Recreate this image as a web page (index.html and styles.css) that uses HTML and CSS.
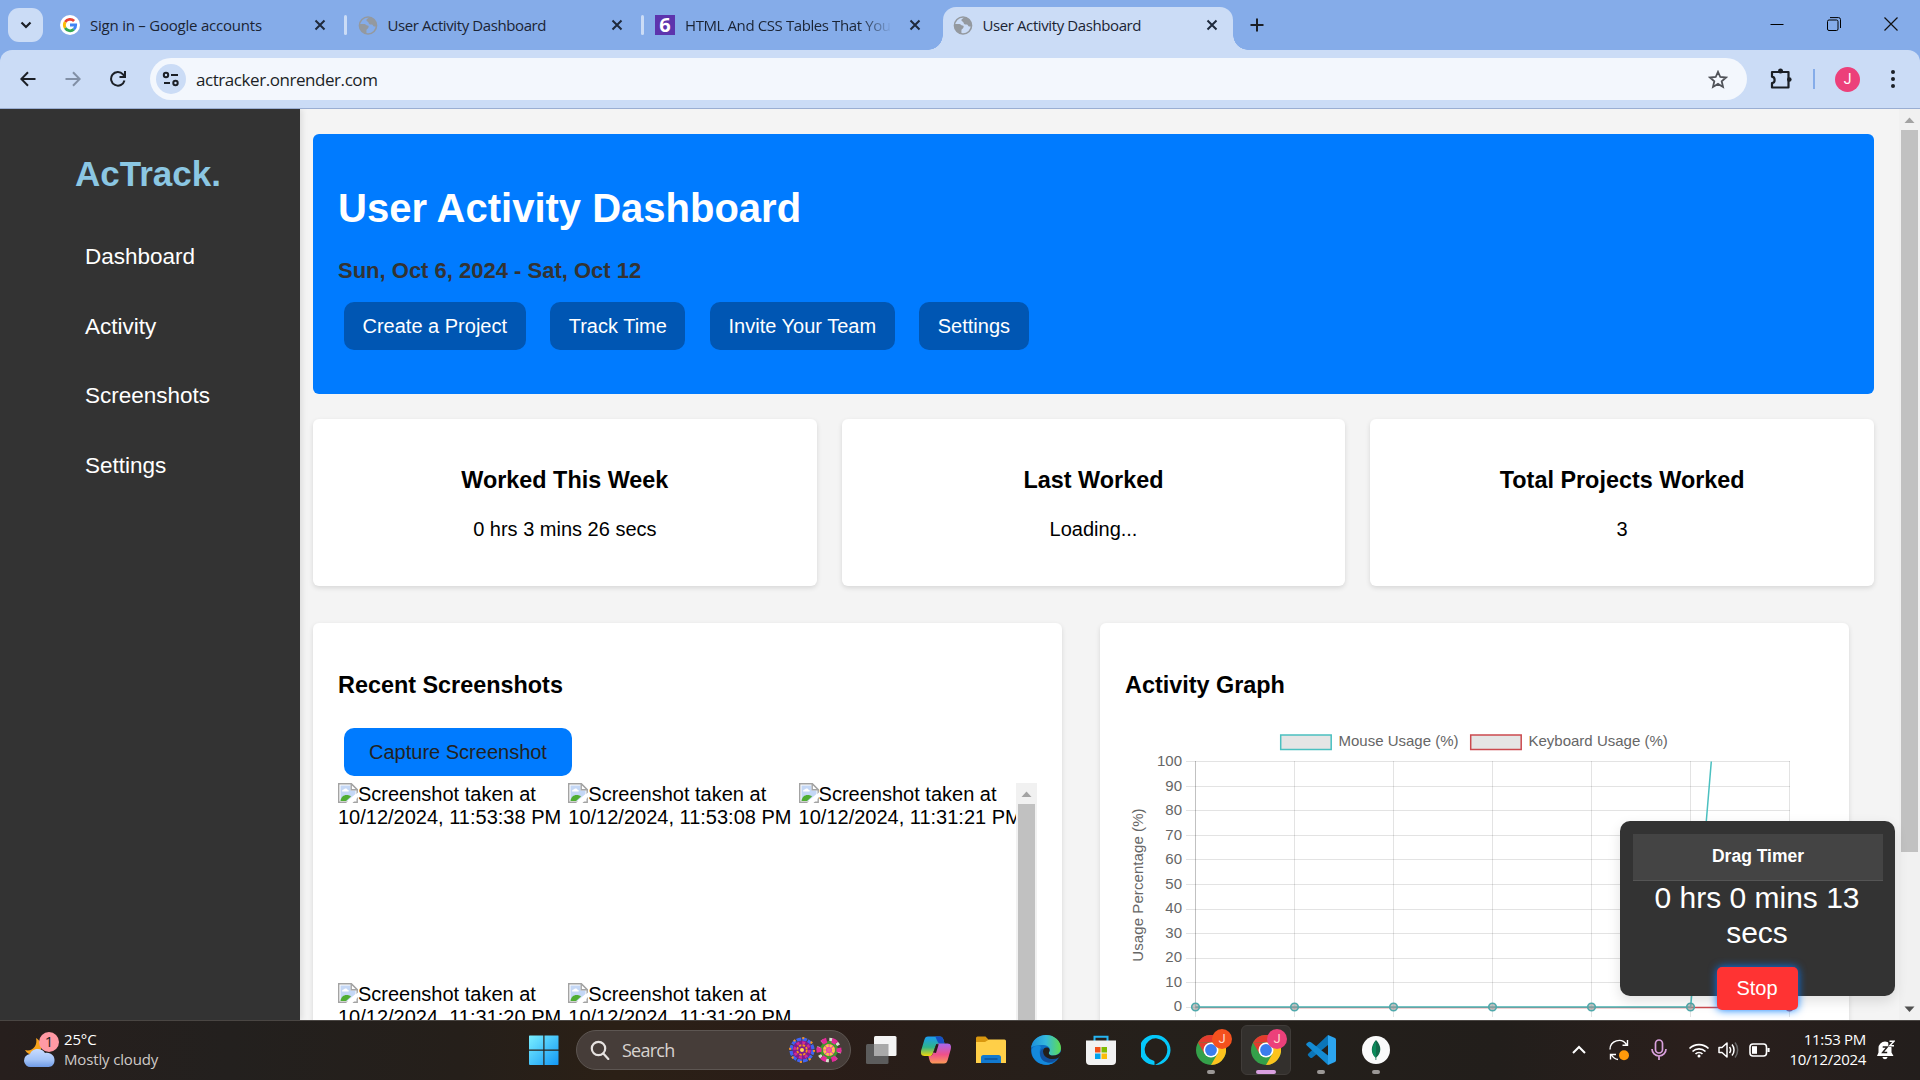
FILE: index.html
```html
<!DOCTYPE html>
<html lang="en">
<head>
<meta charset="utf-8">
<title>User Activity Dashboard</title>
<link rel="stylesheet" href="styles.css">
</head>
<body>
<svg class="defs" width="0" height="0">
  <defs>
    <symbol id="close" viewBox="0 0 12 12"><path d="M1.5 1.5l9 9M10.5 1.5l-9 9" stroke="#1f2a3c" stroke-width="2" fill="none"/></symbol>
    <symbol id="globe" viewBox="0 0 18 18"><circle cx="9" cy="9" r="8.100" fill="none" stroke="#94999f" stroke-width="1.500"/><path d="M1 7.500h4.500c1.500 0 1.500 1.500 3 1.500s1.500 1.500.5 2.500-1.500 1-1.500 2.500v2.500C3.500 16 1 12.500 1 7.500zM10.500 1.200C9 2.500 7.500 2.500 7.500 4s2 1 2 2.300S11 8 12.500 8s1 2 2.500 2h2C17.500 5 14.500 1.800 10.500 1.200z" fill="#94999f"/></symbol>
    <symbol id="broken" viewBox="0 0 20 20">
      <path d="M.7.7h12.500l6 6v12.600H.7z" fill="#fff" stroke="#a3a3a3" stroke-width="1.400"/>
      <path d="M2.500 2.500h10v5h5v3.500L9 18H2.500z" fill="#c4d7f5"/>
      <path d="M4 8.500c0-1.500 1-2 2-2 .5-1.500 3-1.500 3.500.2 1.500 0 1.500 1.800 1 1.800z" fill="#fff"/>
      <path d="M2.500 18c.5-4 3-6 6-6 2 0 3.500.5 4.500 1.500L8 18z" fill="#4fae33"/>
      <path d="M13.200.7v6h6z" fill="#fff" stroke="#a3a3a3" stroke-width="1.400"/>
      <path d="M8 20L20 9.500V14l-5.500 6z" fill="#fff"/>
    </symbol>
    <symbol id="chromelogo" viewBox="0 0 30 30">
      <circle cx="15" cy="15" r="15" fill="#34a04a"/>
      <path d="M2 7.500A15 15 0 0 1 28 7.500H15z" fill="#e33b2e"/><path d="M2 7.500L8.500 18.700 15 8z" fill="#e33b2e"/>
      <path d="M15 7.500h13A15 15 0 0 1 15 30l6.500-11.300z" fill="#fcc31e"/>
      <circle cx="15" cy="15" r="7.500" fill="#fff"/><circle cx="15" cy="15" r="5.900" fill="#3b7ded"/>
    </symbol>
  </defs>
</svg>

<header class="tabstrip">
  <div class="tab-search"><svg width="12" height="12" viewBox="0 0 12 12"><path d="M1.500 3.500L6 8l4.500-4.500" fill="none" stroke="#1b1f26" stroke-width="2.200"/></svg></div>
  <div class="tab">
    <svg class="fav" width="20" height="20" viewBox="0 0 20 20"><circle cx="10" cy="10" r="10" fill="#fff"/><g fill="none" stroke-width="2.800"><path d="M5.200 7a5.700 5.700 0 0 1 8.900-1" stroke="#ea4335"/><path d="M5.200 13a5.900 5.900 0 0 1 0-6" stroke="#fbbc05"/><path d="M5.200 13a5.700 5.700 0 0 0 8.600 1.400" stroke="#34a853"/><path d="M10 10h5.700a5.700 5.700 0 0 1-1.900 4.400" stroke="#4285f4"/></g></svg>
    <span class="tab-title wide">Sign in – Google accounts</span><svg class="x" width="12" height="12"><use href="#close"/></svg>
  </div>
  <div class="tab sep">
    <svg class="fav" width="19" height="19"><use href="#globe"/></svg>
    <span class="tab-title">User Activity Dashboard</span><svg class="x" width="12" height="12"><use href="#close"/></svg>
  </div>
  <div class="tab sep">
    <span class="fav six">6</span>
    <span class="tab-title fade">HTML And CSS Tables That You</span><svg class="x" width="12" height="12"><use href="#close"/></svg>
  </div>
  <div class="tab active">
    <svg class="fav" width="19" height="19"><use href="#globe"/></svg>
    <span class="tab-title">User Activity Dashboard</span><svg class="x" width="12" height="12"><use href="#close"/></svg>
  </div>
  <svg class="newtab" width="14" height="14" viewBox="0 0 14 14"><path d="M7 .5v13M.5 7h13" stroke="#1b1f26" stroke-width="2"/></svg>
  <div class="win">
    <svg width="14" height="14" viewBox="0 0 14 14"><path d="M.5 7.500h13" stroke="#000"/></svg>
    <svg width="14" height="14" viewBox="0 0 14 14" fill="none" stroke="#000"><rect x=".5" y="3" width="10.500" height="10.500" rx="1.500"/><path d="M3 .6h8.500a2 2 0 0 1 2 2V11"/></svg>
    <svg width="14" height="14" viewBox="0 0 14 14"><path d="M.5.5l13 13M13.500.5l-13 13" stroke="#111" stroke-width="1.200"/></svg>
  </div>
</header>

<div class="toolbar">
  <div class="nav-btns">
    <svg width="16" height="16" viewBox="0 0 16 16" fill="none" stroke="#1b1f26" stroke-width="2"><path d="M15.500 8H1.500M8 1.200L1.300 8 8 14.800"/></svg>
    <svg width="16" height="16" viewBox="0 0 16 16" fill="none" stroke="#8290a6" stroke-width="2"><path d="M.5 8h14M8 1.200L14.700 8 8 14.800"/></svg>
    <svg width="16" height="16" viewBox="0 0 16 16" fill="none" stroke="#1b1f26" stroke-width="2"><path d="M14.500 9.500A6.800 6.800 0 1 1 13 3.300L14.800 5.500"/><path d="M15 0v6H9.500"/></svg>
  </div>
  <div class="omnibox">
    <span class="site"><svg width="18" height="16" viewBox="0 0 18 16" fill="none" stroke="#1b1f26" stroke-width="2"><circle cx="4" cy="4" r="2.200"/><path d="M9 4h7M2 12h6"/><circle cx="13.500" cy="12" r="2.200"/></svg></span>
    <span class="url">actracker.onrender.com</span>
    <svg class="star" width="20" height="19" viewBox="0 0 20 19"><path d="M10 1.800l2.300 5.200 5.700.5-4.300 3.800 1.300 5.600-5-3-5 3 1.300-5.600L2 7.500l5.700-.5z" fill="none" stroke="#505359" stroke-width="1.800"/></svg>
  </div>
  <svg class="puzzle" width="22" height="22" viewBox="0 0 22 22"><path d="M2 4h16.500v15.500H2v-4.300c3.500-.5 3.500-6 0-6.500z" fill="none" stroke="#1b1f26" stroke-width="2.200" stroke-linejoin="round"/><circle cx="10.500" cy="3" r="2.500" fill="#1b1f26"/><circle cx="19.300" cy="11.500" r="2.300" fill="#1b1f26"/></svg>
  <i class="tb-sep"></i>
  <span class="avatar">J</span>
  <svg class="dots" width="4" height="18" viewBox="0 0 4 18" fill="#1b1f26"><circle cx="2" cy="2" r="2"/><circle cx="2" cy="9" r="2"/><circle cx="2" cy="16" r="2"/></svg>
</div>

<div class="page">
  <aside class="sidebar">
    <div class="brand">AcTrack.</div>
    <nav><a>Dashboard</a><a>Activity</a><a>Screenshots</a><a>Settings</a></nav>
  </aside>
  <main>
    <section class="hero">
      <h1>User Activity Dashboard</h1>
      <p class="range">Sun, Oct 6, 2024 - Sat, Oct 12</p>
      <div class="actions"><button>Create a Project</button><button>Track Time</button><button>Invite Your Team</button><button>Settings</button></div>
    </section>
    <section class="cards">
      <div class="card"><h3>Worked This Week</h3><p>0 hrs 3 mins 26 secs</p></div>
      <div class="card"><h3>Last Worked</h3><p>Loading...</p></div>
      <div class="card"><h3>Total Projects Worked</h3><p>3</p></div>
    </section>
    <section class="panels">
      <div class="panel">
        <h3>Recent Screenshots</h3>
        <button class="capture">Capture Screenshot</button>
        <div class="gallery">
          <div class="shots">
            <div class="shot"><svg width="20" height="20"><use href="#broken"/></svg>Screenshot taken at<br>10/12/2024, 11:53:38 PM</div>
            <div class="shot"><svg width="20" height="20"><use href="#broken"/></svg>Screenshot taken at<br>10/12/2024, 11:53:08 PM</div>
            <div class="shot"><svg width="20" height="20"><use href="#broken"/></svg>Screenshot taken at<br>10/12/2024, 11:31:21 PM</div>
            <div class="shot"><svg width="20" height="20"><use href="#broken"/></svg>Screenshot taken at<br>10/12/2024, 11:31:20 PM</div>
            <div class="shot"><svg width="20" height="20"><use href="#broken"/></svg>Screenshot taken at<br>10/12/2024, 11:31:20 PM</div>
          </div>
          <div class="bar"><svg width="21" height="21" viewBox="0 0 21 21"><path d="M5.500 14l5-5.500 5 5.500z" fill="#a3a3a3"/></svg><i class="thumb"></i></div>
        </div>
      </div>
      <div class="panel graph">
        <h3>Activity Graph</h3>
        <svg class="chart" width="699" height="310" viewBox="1125 720 699 310">
          <g stroke-width="2">
            <rect x="1280.700" y="735" width="50.500" height="14.500" fill="#e5e5e5" stroke="#4bc0c0" stroke-width="1.500"/>
            <rect x="1470.700" y="735" width="50.500" height="14.500" fill="#e5e5e5" stroke="#cb4a4f" stroke-width="1.500"/>
          </g>
          <g class="lbl"><text x="1338.500" y="746">Mouse Usage (%)</text><text x="1528.500" y="746">Keyboard Usage (%)</text></g>
          <path class="grid" d="M1186 761.500H1790M1186 786.500H1790M1186 810.500H1790M1186 835.500H1790M1186 859.500H1790M1186 884.500H1790M1186 909.500H1790M1186 933.500H1790M1186 958.500H1790M1186 982.500H1790M1186 1007.500H1790"/>
          <path class="grid" d="M1195.500 761V1017M1294.500 761V1017M1393.500 761V1017M1492.500 761V1017M1591.500 761V1017M1690.500 761V1017M1789.500 761V1017"/>
          <path class="grid axis" d="M1195.500 761V1007M1196 1007.500H1790"/>
          <g class="lbl ticks"><text x="1182" y="766">100</text><text x="1182" y="790.500">90</text><text x="1182" y="815">80</text><text x="1182" y="839.500">70</text><text x="1182" y="864">60</text><text x="1182" y="889">50</text><text x="1182" y="913">40</text><text x="1182" y="937.500">30</text><text x="1182" y="962">20</text><text x="1182" y="987">10</text><text x="1182" y="1011">0</text></g>
          <text class="lbl ytitle" transform="translate(1143 885) rotate(-90)">Usage Percentage (%)</text>
          <path d="M1195.500 1007.500H1789.500" stroke="#cb4a4f" stroke-width="1.400"/>
          <path d="M1195.500 1007H1690.700L1711.300 761.500" fill="none" stroke="#4bc0c0" stroke-width="1.500"/>
          <g fill="#9a9a9a" fill-opacity=".6" stroke="#4fa9ab" stroke-width="1.600"><circle cx="1195.500" cy="1007" r="3.800"/><circle cx="1294.500" cy="1007" r="3.800"/><circle cx="1393.500" cy="1007" r="3.800"/><circle cx="1492.500" cy="1007" r="3.800"/><circle cx="1591.500" cy="1007" r="3.800"/><circle cx="1690.500" cy="1007" r="3.800"/><circle cx="1789.500" cy="1007" r="3.800" stroke="#cb4a4f"/></g>
        </svg>
      </div>
    </section>
  </main>
  <div class="scroll">
    <svg width="21" height="21" viewBox="0 0 21 21"><path d="M5.500 14l5-5.500 5 5.500z" fill="#a3a3a3"/></svg>
    <i class="thumb"></i>
    <svg class="down" width="21" height="21" viewBox="0 0 21 21"><path d="M5.500 7.500h10l-5 5.500z" fill="#505050"/></svg>
  </div>
  <div class="timer">
    <div class="drag">Drag Timer</div>
    <div class="time">0 hrs 0 mins 13 secs</div>
    <button class="stop">Stop</button>
  </div>
</div>

<footer class="taskbar">
  <div class="weather">
    <svg width="44" height="40" viewBox="0 0 44 40">
      <path d="M19 7c2 8-4 14-11 12 2 4 7 6 11 5 6-2 8-12 0-17z" fill="#f7a31c"/>
      <path d="M14 36a6.500 6.500 0 0 1-1-13c2-6 12-7 15-1 6-1 10 3 9.500 8s-4 6-7 6z" fill="url(#cl)"/>
      <circle cx="32" cy="11" r="10" fill="#ff99a4"/><text x="32" y="16" text-anchor="middle" class="badge">1</text>
      <defs><linearGradient id="cl" x2="0" y2="1"><stop offset="0" stop-color="#c9dcff"/><stop offset=".6" stop-color="#a3c3f7"/><stop offset="1" stop-color="#6f9be6"/></linearGradient></defs>
    </svg>
    <div class="wtext"><b>25°C</b><span>Mostly cloudy</span></div>
  </div>
  <div class="dock">
    <svg class="start" width="30" height="30" viewBox="0 0 30 30"><defs><linearGradient id="ws" x1="0" y1="0" x2="1" y2="1" gradientUnits="objectBoundingBox"><stop offset="0" stop-color="#7bf0ff"/><stop offset="1" stop-color="#1197f5"/></linearGradient></defs><mask id="wm"><path d="M0 .500h14.300v14.100H0zM15.500.5h14v14.100h-14zM0 15.800h14.300V30H0zM15.500 15.800h14V30h-14z" fill="#fff"/></mask><rect width="30" height="30" rx="1" fill="url(#ws)" mask="url(#wm)"/></svg>
    <div class="search">
      <svg width="20" height="20" viewBox="0 0 20 20" fill="none" stroke="#e6e2e0" stroke-width="2.200"><circle cx="8.500" cy="8.500" r="6.700"/><path d="M13.300 13.500l5 5.500" stroke-linecap="round"/></svg>
      <span>Search</span>
      <svg class="flowers" width="54" height="28" viewBox="0 0 54 28">
        <g transform="translate(13 14)"><circle r="10.800" fill="none" stroke="#3f63f2" stroke-width="3.500" stroke-dasharray="4.650 1"/><circle r="9.500" fill="#7d1c8f"/><circle r="7.500" fill="none" stroke="#d12a96" stroke-width="2.500" stroke-dasharray="3 2.890"/><circle r="12" fill="none" stroke="#f7941e" stroke-width="2" stroke-dasharray="2 7.420"/><circle r="4.800" fill="none" stroke="#f7941e" stroke-width="1.800" stroke-dasharray="2.500 1.270"/><circle r="2" fill="#ffd84a"/></g>
        <g transform="translate(40 14)"><circle r="10.500" fill="none" stroke="#d9dfd0" stroke-width="3.500" stroke-dasharray="3 5.250"/><circle r="9" fill="#3f9a2a"/><circle r="10" fill="none" stroke="#e32a9a" stroke-width="5" stroke-dasharray="5 5.470" stroke-dashoffset="2.500"/><circle r="6" fill="#e23fb0"/><circle r="4.500" fill="none" stroke="#ffc64a" stroke-width="2.800" stroke-dasharray="2.700 .83"/><circle r="2" fill="#f06090"/></g>
      </svg>
    </div>
    <div class="app"><svg width="32" height="30" viewBox="0 0 32 30"><rect x="1" y="9" width="22.500" height="20" rx="1.500" fill="#5c5c5c"/><rect x="9" y="1" width="22.500" height="20" rx="1.500" fill="#f4f4f4"/><path d="M9 9h14.500v12H9z" fill="#a9a9a9"/></svg></div>
    <div class="app"><svg width="32" height="30" viewBox="0 0 32 30"><defs><linearGradient id="c1" x2="0" y2="1"><stop offset="0" stop-color="#1b9cf2"/><stop offset=".55" stop-color="#2fb48a"/><stop offset="1" stop-color="#f3d60b"/></linearGradient><linearGradient id="c2" x2="0" y2="1"><stop offset="0" stop-color="#a667f0"/><stop offset=".55" stop-color="#f0508a"/><stop offset="1" stop-color="#fb9a57"/></linearGradient></defs><path d="M8 1.500h12c3 0 3.500 3 4.500 7h-5c-3 0-4 2-4.800 5L13 18c-.7 2.500-1.500 3-4 3H4.500C1 21 .5 18 1.300 15l3-10C5 2.500 6 1.500 8 1.500z" fill="url(#c1)"/><path d="M15 1.500h5c3 0 3.500 3 4.500 7h-5c-2.500-1-3-6-4.500-7z" fill="#174fc4"/><path d="M24 28.500H13c-2.500 0-3.500-2.500-4.500-7.500 3 0 4-.5 4.700-3L16 11c1-2.500 2-2.500 4-2.500h7.500c3.500 0 4 3 3.200 6l-3 10.500c-.7 2.500-1.700 3.500-3.700 3.500z" fill="url(#c2)"/><path d="M13.300 17.500l3-8.500 2.400.2-2.700 8.800z" fill="#2a1d18"/></svg></div>
    <div class="app"><svg width="30" height="28" viewBox="0 0 30 28"><path d="M0 2a1.500 1.500 0 0 1 1.500-1.500h8L13 4v6H0z" fill="#d9970f"/><path d="M0 6h9l4-2.500h15.500A1.500 1.500 0 0 1 30 5v22H0z" fill="#ffcf48"/><path d="M5 27v-5.500a2.500 2.500 0 0 1 2.500-2.500h15a2.500 2.500 0 0 1 2.500 2.500V27z" fill="#1279cf"/><path d="M8.500 23h13" stroke="#0b4f96" stroke-width="1.400"/></svg></div>
    <div class="app"><svg width="30" height="30" viewBox="0 0 30 30"><defs><linearGradient id="e1" x2="1" y2="0"><stop offset="0" stop-color="#1c8fdc"/><stop offset=".5" stop-color="#35b9dd"/><stop offset="1" stop-color="#5fdc4f"/></linearGradient></defs><circle cx="15" cy="15" r="15" fill="#0c6fc4"/><path d="M0 13C1 5 7.500 0 15 0c9 0 15 6.500 15 13 0 5-4 7.500-8 7.500-4.500 0-5-2-3.500-4 1.500-2.500-1-6.500-6-6.500C7 10 1 11 0 13z" fill="url(#e1)"/><path d="M10 12c-4 7 1 17 12 16C14 33-1 27 1 14c2-4 7-4 9-2z" fill="#1489dc"/><path d="M12.500 13.500c-1.500 6 4 11.500 14.500 9-5 8-18 6-18-4 0-3 1.500-5 3.500-5z" fill="#124f9c"/><path d="M15.500 12.500c2.500 0 4 2 2.700 4.300-1 2 0 3.700 3.800 3.700 3.500 0 6.500-1.200 8-4v3.500l-2.700 3C22 25.500 12.500 24 12 16.500c0-2.500 1.500-4 3.500-4z" fill="#241e1b"/></svg></div>
    <div class="app"><svg width="30" height="30" viewBox="0 0 30 30"><path d="M8.500 6V1.700h13V6" fill="none" stroke="#26b5f2" stroke-width="2"/><path d="M0 5.500h30V26a4 4 0 0 1-4 4H4a4 4 0 0 1-4-4z" fill="#f2f2f2"/><path d="M9 12h5.500v5.500H9z" fill="#f1511b"/><path d="M15.500 12H21v5.500h-5.500z" fill="#80bb00"/><path d="M9 18.500h5.500V24H9z" fill="#00a3ee"/><path d="M15.500 18.500H21V24h-5.500z" fill="#fbbc09"/></svg></div>
    <div class="app"><svg width="30" height="30" viewBox="0 0 30 30"><path fill-rule="evenodd" d="M15 0a15 15 0 1 0-1.500 29.900v-3.200c0-.5-.2-.8-.8-1A11.300 11.300 0 1 1 26.300 15c0 7-5 11-12.300 15A15 15 0 0 0 15 0z" fill="#05c8fa"/></svg></div>
    <div class="app"><svg width="30" height="30"><use href="#chromelogo"/></svg><b class="who">J</b><i class="run"></i></div>
    <div class="app current"><svg width="30" height="30"><use href="#chromelogo"/></svg><b class="who pink">J</b><i class="run"></i></div>
    <div class="app"><svg width="30" height="30" viewBox="0 0 30 30"><path d="M22 0L2.500 18.500c-1 1-1 1.500 0 2.500L4 22.500c1 .8 1.500.8 2.500 0L22 10z" fill="#0b75b8"/><path d="M22 30L.8 10.500c-.8-1-.8-1.500 0-2.300L2.500 7C3.500 6.500 4 6.500 5 7.200L22 20.500z" fill="#148bd3"/><path d="M22 0l7 3c.7.4 1 1 1 1.500v21c0 .5-.3 1-1 1.500l-7 3z" fill="#2ca5f0"/></svg><i class="run"></i></div>
    <div class="app"><svg width="30" height="30" viewBox="0 0 30 30"><circle cx="15" cy="15" r="14" fill="#fafafa"/><path d="M15 5c6 6 5.500 13 .3 17.500V25h-.8v-2.500C9.500 18 9.500 11 15 5z" fill="#11694a"/><path d="M15 6v17c-5-4-5-11 0-17z" fill="#0b8a5a"/></svg><i class="run"></i></div>
  </div>
  <div class="tray">
    <svg width="14" height="10" viewBox="0 0 14 10" fill="none" stroke="#fff" stroke-width="2"><path d="M1 8l6-6 6 6"/></svg>
    <svg class="t-sync" width="20" height="22" viewBox="0 0 20 22" fill="none" stroke="#fff" stroke-width="1.400"><path d="M1 10.500A9 9 0 0 1 17.500 5.500M18.500 1v5.200h-5M9 20.500A9 9 0 0 1 2.500 16M1.500 20.500V15.500h5.500"/><circle cx="15" cy="16.300" r="5" fill="#ff9a0a" stroke="none"/></svg>
    <svg class="t-mic" width="16" height="22" viewBox="0 0 16 22" fill="none" stroke="#d9a0dd" stroke-width="1.700"><rect x="4.500" y="1" width="7" height="13" rx="3.500"/><path d="M1 10a7 7 0 0 0 14 0M8 17v4"/></svg>
    <svg class="t-wifi" width="22" height="16" viewBox="0 0 22 16" fill="none" stroke="#fff" stroke-width="1.700"><path d="M1.500 6.500a13.500 13.500 0 0 1 19 0M4.500 9.500a9.300 9.300 0 0 1 13 0M7.500 12a5 5 0 0 1 7 0"/><circle cx="11" cy="14" r="1.500" fill="#fff" stroke="none"/></svg>
    <svg class="t-vol" width="21" height="18" viewBox="0 0 21 18" fill="none" stroke="#fff" stroke-width="1.500"><path d="M1 6.500h3L9 2v14l-5-4.500H1z" stroke-linejoin="round"/><path d="M11.500 6a5 5 0 0 1 0 6M14 3.500a8.500 8.500 0 0 1 0 11"/><path d="M17 1.500a12 12 0 0 1 0 15" stroke="#666"/></svg>
    <svg class="t-bat" width="21" height="14" viewBox="0 0 21 14" fill="none" stroke="#fff" stroke-width="1.600"><rect x="1" y="1" width="16.500" height="12" rx="3"/><path d="M19.500 5v4" stroke-width="2.200"/><rect x="3" y="3.200" width="5" height="7.600" fill="#fff" stroke="none"/></svg>
    <div class="clock"><span>11:53 PM</span><span>10/12/2024</span></div>
    <svg class="t-bell" width="18" height="20" viewBox="0 0 18 20"><path d="M1.500 8a6.500 6.500 0 0 1 6.500-6.500c3.500 0 6.500 3 6.500 6.500v4.500l2 3.500H0l1.500-3.500zM5.500 17h5c-.5 3-4.500 3-5 0z" fill="#fff"/><path d="M11.300 0H18v7h-6.700z" fill="#221e1c"/><path d="M5.700 7h4.500l-4.500 5.500h4.500" fill="none" stroke="#221e1c" stroke-width="1.500"/><path d="M12.500 1.200H17l-4.300 4.600H17" fill="none" stroke="#fff" stroke-width="1.400"/></svg>
  </div>
</footer>
</body>
</html>
```
FILE: styles.css
```css
* { box-sizing: border-box; }
html, body { margin: 0; width: 1920px; height: 1080px; overflow: hidden; }
body { display: flex; flex-direction: column; font-family: "Liberation Sans", Arial, sans-serif; font-size: 20px; color: #000; }
svg { display: block; flex: none; }
button { font: inherit; border: 0; margin: 0; }
.defs { position: absolute; }

/* tab strip */
.tabstrip { flex: none; height: 50px; display: flex; background: #85ace9; font: 15px "Open Sans", sans-serif; letter-spacing: -.4px; color: #1b2434; }
.tab-search { width: 35px; height: 34px; margin: 8px 4px 0 8px; border-radius: 11px; background: #cbdcf6; display: grid; place-items: center; }
.tab { position: relative; width: 297.5px; height: 50px; display: flex; align-items: center; padding: 0 19px 0 13px; }
.fav { width: 20px; margin-right: 10px; }
.six { height: 20px; background: #5d34ad; color: #fff; font: bold 20px/19px "Open Sans", sans-serif; text-align: center; letter-spacing: 0; }
.tab-title { flex: 1; white-space: nowrap; overflow: hidden; }
.wide { letter-spacing: -.22px; }
.fade { flex: none; width: 205px; margin-right: auto; -webkit-mask-image: linear-gradient(90deg, #000 175px, transparent 207px); }
.sep::before { content: ""; position: absolute; left: -1px; top: 15px; width: 3px; height: 20px; border-radius: 2px; background: #cbdcf6; }
.active::before { content: ""; position: absolute; inset: 7px 4px 0 3px; background: #cbdcf6; border-radius: 13px 13px 0 0; }
.active::after { content: ""; position: absolute; left: -12px; right: -11px; bottom: 0; height: 15px; background: radial-gradient(circle at 0 0, transparent 14.500px, #cbdcf6 15px) left / 15px 15px no-repeat, radial-gradient(circle at 100% 0, transparent 14.500px, #cbdcf6 15px) right / 15px 15px no-repeat; }
.active > * { position: relative; z-index: 1; }
.newtab { margin: 18px 0 0 13px; }
.win { margin: 17px 22px 0 auto; display: flex; gap: 43px; }

/* toolbar */
.toolbar { flex: none; height: 59px; display: flex; align-items: center; background: #cbdcf6; border-bottom: 1px solid #9aaed2; border-radius: 12px 12px 0 0; box-shadow: 0 -12px 0 #85ace9; }
.tabstrip { position: relative; z-index: 1; }
.nav-btns { display: flex; gap: 29px; padding: 0 24px 0 20px; }
.omnibox { width: 1597px; height: 42px; border-radius: 21px; background: #f3f7fd; display: flex; align-items: center; padding: 0 19px 0 6px; }
.site { width: 30px; height: 30px; border-radius: 50%; background: #cbdcf6; display: grid; place-items: center; }
.url { flex: 1; margin-left: 10px; font: 17px "Open Sans", sans-serif; letter-spacing: -.44px; color: #1b1f26; }
.puzzle { margin-left: 23px; }
.tb-sep { width: 2px; height: 20px; margin: 0 20px 0 21px; background: #85ace9; }
.avatar { width: 25px; height: 25px; border-radius: 50%; background: #ec407a; color: #fff; font: 14px/25px Roboto, sans-serif; text-align: center; }
.dots { margin-left: 31px; }

/* page */
.page { position: relative; flex: none; height: 911px; display: flex; background: #f4f4f4; overflow: hidden; }
.sidebar { width: 300px; background: #333; box-shadow: 2px 0 6px rgba(0,0,0,.1); color: #fff; }
.brand { margin: 44px 0 0 75px; font-size: 35px; line-height: 42px; font-weight: bold; color: #8bc7e3; }
nav { display: flex; flex-direction: column; margin: 36px 0 0 85px; }
nav a { height: 69.700px; padding-top: 13px; font-size: 22.500px; line-height: 26px; }
main { width: 1599px; padding: 25px 25px 0 13px; }
h1, h3, p { margin: 0; }
h3 { font-size: 23.400px; line-height: 27px; }
.hero { height: 260px; padding: 51px 25px 0; border-radius: 6px; background: #007bff; color: #fff; }
h1 { font-size: 40px; line-height: 46px; }
.range { margin-top: 27px; font-size: 22px; line-height: 26px; font-weight: bold; color: #333; }
.actions { display: flex; gap: 24.700px; margin: 18px 0 0 6px; }
.actions button { height: 48px; padding: 0 18.500px; border-radius: 10px; background: #0056b3; color: #fff; white-space: nowrap; }
.cards { display: flex; gap: 25px; margin-top: 25px; }
.card { flex: 1; height: 167px; padding-top: 48px; border-radius: 6px; background: #fff; box-shadow: 0 2px 5px rgba(0,0,0,.12); text-align: center; }
.card p { margin-top: 23px; line-height: 24px; }
.panels { display: flex; gap: 38px; margin-top: 37px; }
.panel { width: 749px; height: 500px; padding: 49px 25px 0; border-radius: 6px; background: #fff; box-shadow: 0 2px 5px rgba(0,0,0,.12); }
.capture { display: block; width: 228px; height: 48px; margin: 29px 0 0 6px; padding: 0; border-radius: 10px; background: #007bff; color: #222; }
.gallery { display: flex; height: 400px; margin-top: 7px; }
.shots { width: 678px; display: grid; grid-template-columns: repeat(3, 230.300px); grid-auto-rows: 200px; overflow: hidden; }
.shot { white-space: nowrap; line-height: 23px; }
.shot svg { float: left; }
.bar, .scroll { width: 21px; background: #f1f1f1; flex: none; }
.thumb { display: block; margin: 0 2px; height: 722px; background: #c1c1c1; }
.scroll { display: flex; flex-direction: column; }
.down { margin-top: auto; }
.chart { margin-top: 21px; }
.lbl { font-size: 15px; fill: #666; }
.ticks { text-anchor: end; }
.ytitle { text-anchor: middle; letter-spacing: .08px; }
.grid { stroke: rgba(0,0,0,.11); stroke-width: 1; }
.axis { stroke: rgba(0,0,0,.15); }

/* floating timer */
.timer { position: absolute; left: 1620px; top: 712px; width: 275px; height: 175px; padding: 13px 12px 0 13px; border-radius: 10px; background: #333; color: #fff; text-align: center; box-shadow: 0 5px 13px rgba(0,0,0,.12); }
.drag { height: 47px; border-bottom: 1px solid #555; background: #444; font-size: 17.500px; font-weight: bold; line-height: 44px; }
.time { padding: 0 11px 0 9px; font-size: 30px; line-height: 34.500px; }
.stop { width: 81px; height: 43px; margin: 17px 2px 0 0; padding: 0; border-radius: 5px; background: #f33; color: #fff; box-shadow: 0 0 8px #007bff; }

/* taskbar */
.taskbar { position: relative; flex: none; height: 60px; display: flex; align-items: center; border-top: 1px solid #4a4643; background: linear-gradient(90deg, #271f1d, #23201e 12%, #251f1a 24%, #2b2016 32%, #2a1d18 42%, #25201b 60%, #221e1b 78%, #2a1f1c 88%, #231e1c); font: 15px "Open Sans", sans-serif; letter-spacing: -.3px; color: #fff; }
.weather { display: flex; width: 529px; padding-left: 17px; }
.badge { font: 15px "Open Sans", sans-serif; fill: #222; }
.wtext { display: flex; flex-direction: column; margin: -2px 0 0 3px; line-height: 20px; letter-spacing: -.15px; }
.wtext b { font-weight: normal; }
.wtext span { color: #cfcac8; }
.dock { display: flex; align-items: center; width: 876px; margin-top: -1px; }
.search { flex: none; width: 275px; height: 40px; margin: 0 5px 0 17px; padding: 0 7px 0 13px; display: flex; align-items: center; gap: 12px; border: 1px solid #5d5652; border-radius: 20px; background: #463d39; font-size: 18px; letter-spacing: -.75px; color: #d8d3d0; }
.flowers { margin-left: auto; }
.app { position: relative; width: 50px; height: 50px; margin-right: 5px; display: grid; place-items: center; flex: none; }
.current { border-radius: 6px; background: #33302d; border: 1px solid #403c39; }
.who { position: absolute; right: 4px; top: 4px; width: 20px; height: 20px; border-radius: 50%; background: #f4511e; color: #ffd9cc; font: 13px/20px Roboto, sans-serif; text-align: center; }
.pink { background: #ec407a; right: 3px; top: 3px; }
.run { position: absolute; bottom: 1px; left: 21px; width: 8px; height: 4px; border-radius: 2px; background: #9b9896; }
.current .run { left: 14px; width: 20px; bottom: 0; background: #d9a0e0; }
.tray { display: flex; align-items: center; margin: -1px 0 0 auto; padding-right: 25px; }
.t-sync { margin-left: 23px; }
.t-mic { margin-left: 22px; }
.t-wifi { margin-left: 21px; }
.t-vol { margin-left: 8px; }
.t-bat { margin-left: 10px; }
.clock { width: 96px; margin-top: -3px; display: flex; flex-direction: column; align-items: flex-end; line-height: 20px; }
.t-bell { margin-left: 11px; }
```
